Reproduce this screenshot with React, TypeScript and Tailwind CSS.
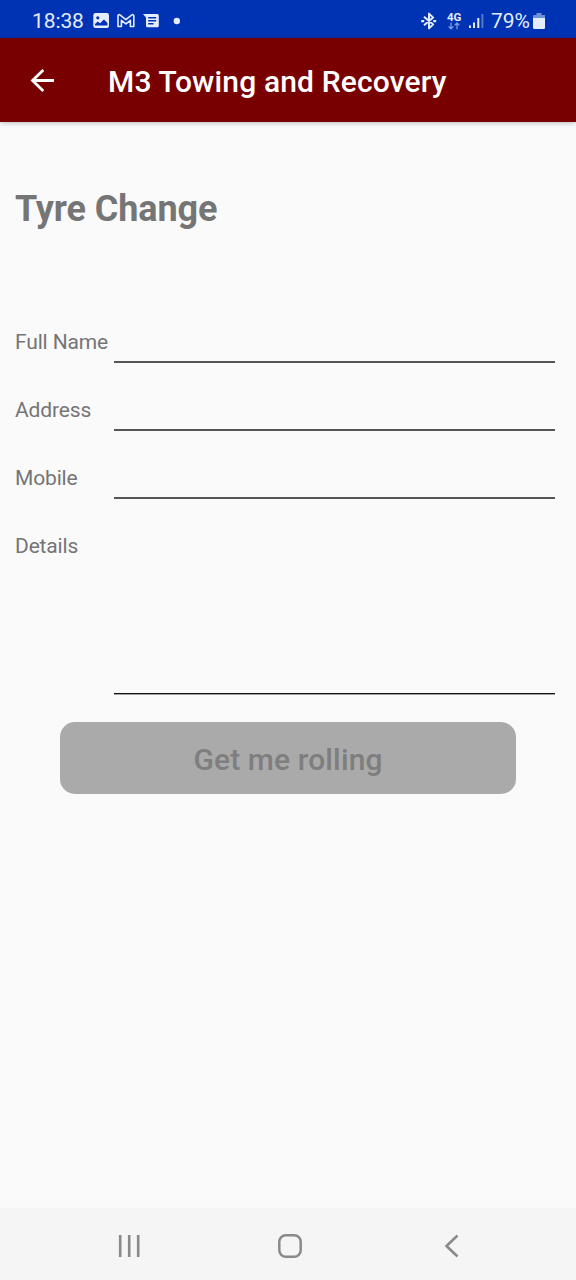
import { useState } from 'react';
import { clsx } from 'clsx';

type FieldKey = 'name' | 'address' | 'mobile' | 'details';

const FIELDS: { key: FieldKey; label: string }[] = [
  { key: 'name', label: 'Full Name' },
  { key: 'address', label: 'Address' },
  { key: 'mobile', label: 'Mobile' },
];

function StatusBar() {
  return (
    <div className="flex h-[38px] shrink-0 items-center bg-[#0033b4] pr-[31px] pl-8 text-[#e4ecfd]">
      <span className="w-[61px] pt-1 text-[21px] leading-none tracking-[-0.1px]">18:38</span>

      {/* Notifications */}
      <svg viewBox="0 0 88 18" className="mt-1 h-[18px] w-[88px]" fill="none">
        <path
          fill="currentColor"
          fillRule="evenodd"
          d="M2.5 1h11.2A2.2 2.2 0 0 1 16 3.2v10.6a2.2 2.2 0 0 1-2.3 2.2H2.5A2.2 2.2 0 0 1 .3 13.8V3.2A2.2 2.2 0 0 1 2.5 1ZM2 13.500h12.500V11L11 7.500 7 11.200 4.800 9.500 2 12v1.500ZM4.800 4.200a1.600 1.600 0 1 0 0 3.200 1.600 1.600 0 0 0 0-3.200Z"
        />
        <path
          stroke="currentColor"
          strokeWidth="1.6"
          strokeLinejoin="round"
          d="M25 14.5V3.6c0-1 1.200-1.300 1.900-.7l6 4.700 6-4.700c.7-.6 1.900-.3 1.900.7v10.900h-3.400V8.300l-4.500 3.600-4.500-3.600v6.200H25Z"
        />
        <path
          fill="currentColor"
          fillRule="evenodd"
          d="M50 2h14.300a1.500 1.500 0 0 1 1.500 1.500v10.300a1.500 1.500 0 0 1-1.500 1.500h-9.800a1.500 1.500 0 0 1-1.500-1.500V5.500L50 2Zm5.200 3v1.500h8V5h-8Zm0 3v1.500h8V8h-8Zm0 3v1.500h5.300V11h-5.300Z"
        />
        <circle cx="83.800" cy="9" r="3.200" fill="currentColor" />
      </svg>

      <div className="flex-1" />

      {/* Bluetooth, mobile data and signal strength */}
      <svg viewBox="0 0 16 18" className="mt-[3px] mr-[10px] h-[18px] w-4" fill="none">
        <path stroke="currentColor" strokeWidth="2" strokeLinejoin="round" d="m3 4.800 9.200 7.600-4.200 4V1.600l4.200 4L3 13.200" />
        <path fill="currentColor" d="M.2 7.900h3v2.300h-3zM12.200 7.900h3v2.300h-3z" />
      </svg>
      <div className="mt-[3px] flex w-[22px] flex-col items-start">
        <span className="text-[11.5px] leading-[10px] font-bold">4G</span>
        <svg viewBox="0 0 14 8" className="h-2 w-3.5 text-[#7d9be0]" fill="none" stroke="currentColor" strokeWidth="1.3">
          <path d="M4 .5v6.200M1.600 4.400 4 6.800l2.400-2.400M10 7.300V1M7.600 3.400 10 1l2.400 2.400" />
        </svg>
      </div>
      <svg viewBox="0 0 15 15" className="mt-[5px] mr-[7px] h-[15px] w-[15px]" fill="currentColor">
        <path d="M0 11.500h2V14H0zM4 8.500h2V14H4zM8.300 4h2v10h-2z" />
        <path opacity=".4" d="M12.500 0h1.800v14h-1.800z" />
      </svg>
      <span className="w-[42px] pt-1 text-[21px] leading-none whitespace-nowrap">79%</span>
      <svg viewBox="0 0 12 17" className="mt-[5px] h-[17px] w-3" fill="currentColor">
        <path opacity=".5" d="M3.500 0h5v2H12v3H0V3.200Q0 2 1.200 2h2.300z" />
        <path d="M0 5h12v9.500a1.500 1.500 0 0 1-1.500 1.500h-9A1.500 1.500 0 0 1 0 14.500z" />
      </svg>
    </div>
  );
}

function AppBar() {
  return (
    <header className="z-10 flex h-[84px] shrink-0 items-center bg-[#780000] pt-[2px] text-white shadow-[0_1px_5px_rgba(0,0,0,0.25)]">
      <button aria-label="Back" className="ml-[30px] w-[78px]">
        <svg viewBox="0 0 24 24" className="h-6 w-6" fill="none" stroke="currentColor" strokeWidth="2.8">
          <path d="M24 11.500H2.500M13.300 1 2.500 11.500 13.300 22" />
        </svg>
      </button>
      <h1 className="pt-[2px] text-[30px] leading-none font-medium tracking-[0.15px] whitespace-nowrap">
        M3 Towing and Recovery
      </h1>
    </header>
  );
}

function NavBar() {
  return (
    <nav className="flex h-[72px] shrink-0 items-center bg-[#f5f5f5] pt-1 text-[#8a8a8a]">
      <button aria-label="Recents" className="ml-[118px] w-[160px]">
        <svg viewBox="0 0 22 24" className="h-6 w-[22px]" stroke="currentColor" strokeWidth="2.6">
          <path d="M2.200 1v22M11.200 1v22M20.200 1v22" />
        </svg>
      </button>
      <button aria-label="Home" className="w-[166px]">
        <svg viewBox="0 0 24 24" className="h-6 w-6" fill="none" stroke="currentColor" strokeWidth="2.500">
          <rect x="1.300" y="1.300" width="21.400" height="21.400" rx="6.500" />
        </svg>
      </button>
      <button aria-label="Back">
        <svg viewBox="0 0 16 24" className="h-6 w-4" fill="none" stroke="currentColor" strokeWidth="2.600">
          <path d="M13.500 1.500 2.500 12l11 10.500" />
        </svg>
      </button>
    </nav>
  );
}

export default function App() {
  const [values, setValues] = useState<Record<FieldKey, string>>({ name: '', address: '', mobile: '', details: '' });

  const update = (key: FieldKey, value: string) => setValues(prev => ({ ...prev, [key]: value }));

  const ready = Object.values(values).every(v => v.trim() !== '');

  return (
    <div className="flex h-[1280px] w-[576px] flex-col overflow-hidden bg-[#fafafa] font-['Roboto',sans-serif]">
      <StatusBar />
      <AppBar />

      <main className="flex-1 text-[#757575]">
        <h2 className="mt-[69px] ml-[15px] text-[36px] leading-9 font-bold tracking-[-0.1px]">Tyre Change</h2>

        <form className="mt-[68px] pr-[21px] pl-[15px]" onSubmit={e => e.preventDefault()}>
          {FIELDS.map(({ key, label }) => (
            <label key={key} className="flex h-[68px] items-start">
              <span className="w-[99px] pt-[35px] text-[21px] leading-6 tracking-[-0.15px] whitespace-nowrap">{label}</span>
              <input
                value={values[key]}
                onChange={e => update(key, e.target.value)}
                className="mt-4 h-[52px] min-w-0 flex-1 border-b-2 border-[#555555] text-[21px] outline-none"
              />
            </label>
          ))}
          <label className="flex items-start">
            <span className="w-[99px] pt-[35px] text-[21px] leading-6 tracking-[-0.15px]">Details</span>
            <textarea
              value={values.details}
              onChange={e => update('details', e.target.value)}
              className="mt-[34px] block h-[161px] min-w-0 flex-1 resize-none border-b border-[#111111] text-[21px] shadow-[0_1px_0_#a0a0a0] outline-none"
            />
          </label>

          <button
            disabled={!ready}
            className={clsx(
              'mt-7 ml-[45px] h-[72px] w-[456px] rounded-[15px] pt-[3px] text-[30px] leading-none font-medium tracking-[0.12px]',
              ready ? 'bg-[#780000] text-white' : 'bg-[#aaaaaa] text-[#7e7e7e]'
            )}
          >
            Get me rolling
          </button>
        </form>
      </main>

      <NavBar />
    </div>
  );
}
